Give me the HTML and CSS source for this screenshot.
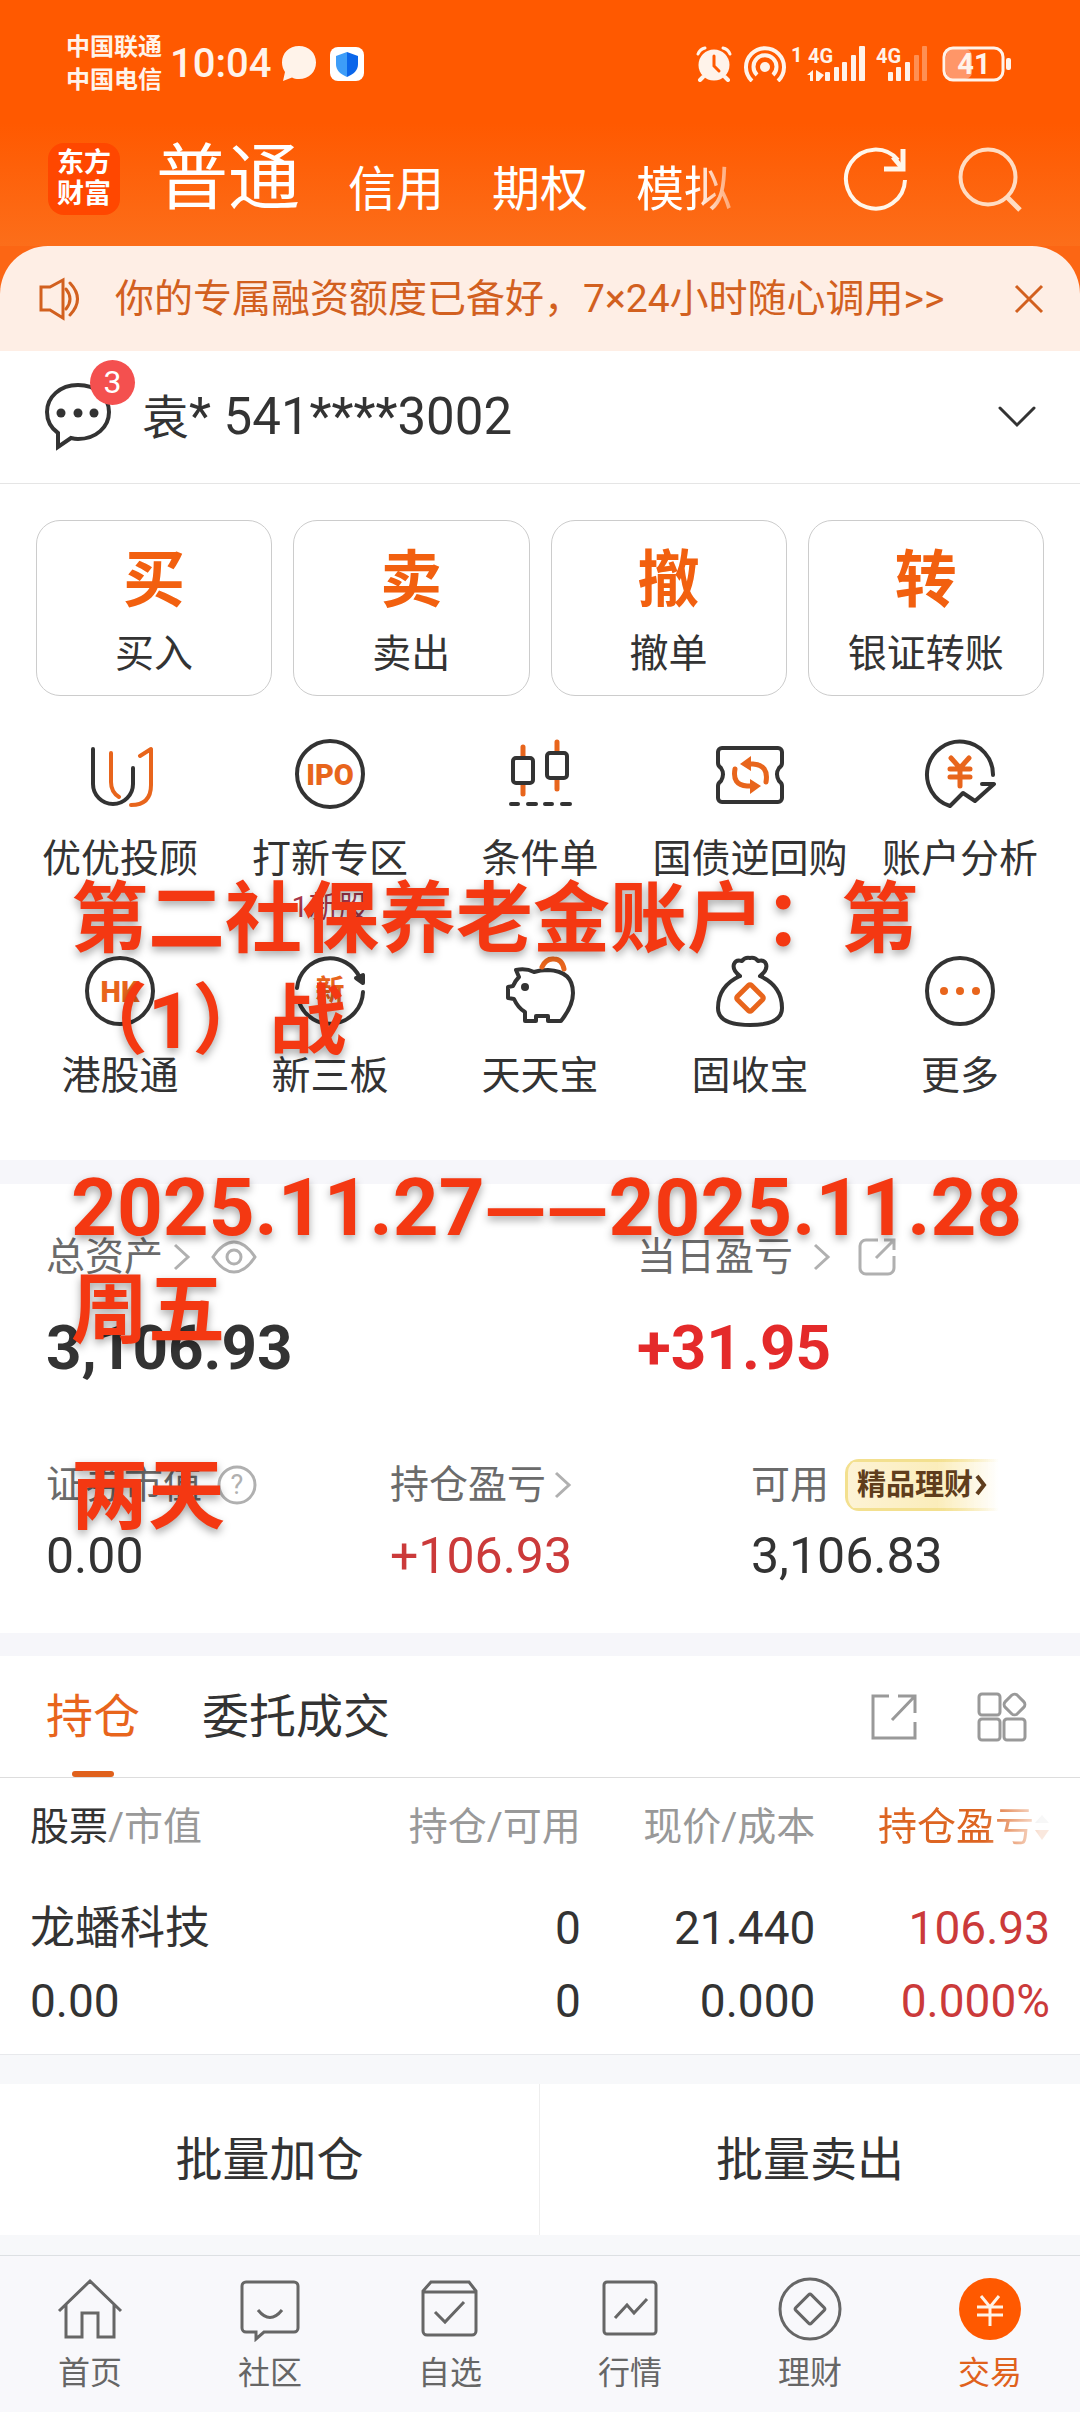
FILE: index.html
```html
<!DOCTYPE html>
<html lang="zh-CN">
<head>
<meta charset="utf-8">
<meta name="viewport" content="width=device-width, initial-scale=1">
<title>东方财富 交易</title>
<link rel="stylesheet" href="styles.css">
</head>
<body>
<div class="screen">
  <header class="top">
    <div class="status">
      <div class="carriers"><span>中国联通</span><span>中国电信</span></div>
      <span class="clock">10:04</span>
      <svg class="status-chat" width="36" height="36" viewBox="0 0 36 36"><path d="M18 0C28 0 35 7 35 16.500S28 33 18 33c-3 0-5-.5-7-1.500L2 35l2-9C2 23 1 20 1 16.500 1 7 8 0 18 0z" fill="#fff3ea"/></svg>
      <svg width="36" height="36" viewBox="0 0 36 36"><rect x="1" y="1" width="34" height="34" rx="8" fill="#fff"/><path d="M18 6l11 4v8c0 6-4 10-11 13z" fill="#0a66ea"/><path d="M18 6L7 10v8c0 6 4 10 11 13z" fill="#3d9df8"/></svg>
      <div class="status-right">
        <svg width="36" height="36" viewBox="0 0 36 36" fill="none" stroke="#fff3ea" stroke-linecap="round"><circle cx="18" cy="19" r="15.500" fill="#fff3ea" stroke="none"/><path d="M2 8q2-5 7-6M34 8q-2-5-7-6" stroke-width="3"/><path d="M7 31l-3 3M29 31l3 3" stroke-width="4"/><path d="M18 10v10l5 5" stroke="#ff5900" stroke-width="3"/></svg>
        <svg width="42" height="36" viewBox="0 0 42 36" fill="none" stroke="#fff3ea" stroke-width="4"><path d="M8 35a19 19 0 1 1 26 0M13 29a11.500 11.500 0 1 1 16 0"/><circle cx="21" cy="21" r="5" fill="#fff3ea" stroke="none"/></svg>
        <svg class="signals" width="140" height="44" viewBox="0 -4 140 44" fill="#fff3ea"><g font-family="Roboto, sans-serif" font-weight="700" font-size="20"><text x="1" y="16">1</text><text x="18" y="17">4G</text><text x="86" y="17">4G</text></g><path d="M17 29l6-5v11h-3v-6zM26 24l8 5-5 6h-3z"/><rect x="35" y="26" width="5" height="9" rx="1"/><rect x="44" y="21" width="5" height="14" rx="1"/><rect x="52" y="16" width="5" height="19" rx="1"/><rect x="61" y="9" width="5" height="26" rx="1"/><rect x="69" y="0" width="6" height="35" rx="1"/><rect x="98" y="26" width="5" height="9" rx="1"/><rect x="106" y="21" width="5" height="14" rx="1"/><rect x="115" y="16" width="5" height="19" rx="1"/><g opacity=".35"><rect x="124" y="9" width="5" height="26" rx="1"/><rect x="132" y="0" width="5" height="35" rx="1"/></g></svg>
        <svg class="battery" width="70" height="36" viewBox="0 0 70 36"><rect x="4" y="3" width="26" height="30" rx="7" fill="#ff9668"/><rect x="2" y="2" width="59" height="32" rx="9" fill="none" stroke="#fff3ea" stroke-width="3"/><rect x="64" y="12" width="5" height="12" rx="2" fill="#fff3ea"/><text x="32" y="28" text-anchor="middle" font-family="Roboto, sans-serif" font-weight="700" font-size="29" fill="#fff3ea">41</text></svg>
      </div>
    </div>
    <nav class="modes">
      <a class="logo" href="#"><span>东方</span><span>财富</span></a>
      <div class="mode-list">
        <a class="mode mode-on" href="#">普通</a>
        <a class="mode" href="#">信用</a>
        <a class="mode" href="#">期权</a>
        <a class="mode mode-fade" href="#">模拟</a>
      </div>
      <button class="icon-btn" aria-label="刷新"><svg width="66" height="66" viewBox="0 0 66 66" fill="none" stroke="#fff6ea" stroke-width="4"><path d="M62 34A29.500 29.500 0 1 1 55 14"/><path d="M60 3v20H41" stroke-width="5"/><path d="M50 11l10 12" stroke-width="5"/></svg></button>
      <button class="icon-btn" aria-label="搜索"><svg width="66" height="66" viewBox="0 0 66 66" fill="none" stroke="#ffdcc2" stroke-width="4"><circle cx="31" cy="31" r="27.500"/><path d="M50 51l13 13" stroke-width="5"/></svg></button>
    </nav>
  </header>

  <div class="notice-wrap">
    <div class="notice">
      <svg width="42" height="44" viewBox="0 0 42 44" fill="none" stroke="#d2601f" stroke-width="3"><path d="M2 10h9L24 3v38l-13-8H2z"/><path d="M27 12q8 10 0 20M31 6q15 16 0 32" stroke-linecap="round"/></svg>
      <a class="notice-text" href="#">你的专属融资额度已备好，7×24小时随心调用&gt;&gt;</a>
      <button class="icon-btn" aria-label="关闭"><svg width="30" height="30" viewBox="0 0 30 30" fill="none" stroke="#d2601f" stroke-width="3"><path d="M2 2l26 26M28 2L2 28"/></svg></button>
    </div>
  </div>

  <div class="account">
    <button class="icon-btn messages" aria-label="消息"><svg width="68" height="70" viewBox="0 0 68 70" fill="none" stroke="#333" stroke-width="4"><path d="M34 3c18 0 31 12 31 27S52 57 34 57c-3 0-5-.5-7-1L14 65V51C7 46 3 39 3 30 3 15 16 3 34 3z"/><g fill="#333" stroke="none"><circle cx="17" cy="31" r="4.500"/><circle cx="34" cy="31" r="4.500"/><circle cx="50" cy="31" r="4.500"/></g></svg><span class="badge">3</span></button>
    <span class="account-id"><span class="account-name">袁</span>* 541****3002</span>
    <button class="icon-btn" aria-label="切换账户"><svg width="38" height="24" viewBox="0 0 38 24" fill="none" stroke="#333" stroke-width="3" stroke-linecap="round"><path d="M2 3l17 17L36 3"/></svg></button>
  </div>

  <section class="quick">
    <button class="quick-btn"><span class="quick-glyph">买</span><span>买入</span></button>
    <button class="quick-btn"><span class="quick-glyph">卖</span><span>卖出</span></button>
    <button class="quick-btn"><span class="quick-glyph">撤</span><span>撤单</span></button>
    <button class="quick-btn"><span class="quick-glyph">转</span><span>银证转账</span></button>
  </section>

  <section class="services">
    <a class="service" href="#"><svg class="ico" viewBox="0 0 72 72"><path d="M9 11v35a20 20 0 0 0 40 0V30"/><path class="o" d="M27 15v29q0 10 8 15M56 18l11-7v36q0 20-20 20"/></svg><span>优优投顾</span></a>
    <a class="service" href="#"><svg class="ico" viewBox="0 0 72 72"><circle cx="36" cy="36" r="33"/><text class="heavy" x="36" y="47" text-anchor="middle">IPO</text></svg><span>打新专区</span><small>1新股</small></a>
    <a class="service" href="#"><svg class="ico" viewBox="0 0 72 72"><path class="o w" d="M19 9v10M19 46v10M53 4v10M53 41v10"/><rect x="9" y="20" width="20" height="25" rx="3"/><rect x="43" y="15" width="20" height="25" rx="3"/><path d="M7 66h7M24 66h8M41 66h7M58 66h8"/></svg><span>条件单</span></a>
    <a class="service" href="#"><svg class="ico" viewBox="0 0 72 72"><path d="M8 10h56a4 4 0 0 1 4 4v11q0 3-3 5-4 6 0 13 3 2 3 5v12a4 4 0 0 1-4 4H8a4 4 0 0 1-4-4V48q0-3 3-5 4-7 0-13-3-2-3-5V14a4 4 0 0 1 4-4z"/><path class="o w" d="M21 31q-3 16 12 17h4M52 44q3-17-13-18h-4"/><path class="of" d="M26 26l11-8v15zM47 48l-11-7v15z"/></svg><span>国债逆回购</span></a>
    <a class="service" href="#"><svg class="ico" viewBox="0 0 72 72"><path d="M69 37A33 33 0 1 0 26 68L39 55l12 8 19-17H58"/><path class="o w" d="M27 20l9 10 9-10M36 30v18M26 31h20M26 39h20"/></svg><span>账户分析</span></a>
    <a class="service" href="#"><svg class="ico" viewBox="0 0 72 72"><circle cx="36" cy="36" r="33"/><text class="heavy" x="36" y="47" text-anchor="middle">HK</text></svg><span>港股通</span></a>
    <a class="service" href="#"><svg class="ico" viewBox="0 0 72 72"><path d="M3 33A33 33 0 0 1 66 23M69 37A33 33 0 0 1 5 47"/><path d="M62 23l7-3v8z" fill="#333"/><text x="36" y="46" text-anchor="middle">新</text></svg><span>新三板</span></a>
    <a class="service" href="#"><svg class="ico" viewBox="0 0 72 72"><path d="M30 17q-8-4-18-2l3 7q-4 4-6 9l-5 1v11l6 1q4 9 11 13v9h11v-5h12v5h13q12-15 12-28 0-22-25-23-8 0-14 2z"/><path class="o w" d="M38 12q4-9 12-8 8 0 10 10"/><circle cx="21" cy="32" r="4" fill="#333" stroke="none"/></svg><span>天天宝</span></a>
    <a class="service" href="#"><svg class="ico" viewBox="0 0 72 72"><path d="M26 21q-8-6-6-12 2-5 8-3 3-4 8-3 5-1 8 3 6-2 8 3 2 6-6 12 22 10 22 32Q68 70 36 70T4 53Q4 31 26 21M26 21l-2-1M46 21l2-1"/><rect class="o w" x="26" y="33" width="20" height="20" rx="2" transform="rotate(45 36 43)"/></svg><span>固收宝</span></a>
    <a class="service" href="#"><svg class="ico" viewBox="0 0 72 72"><circle cx="36" cy="36" r="33"/><g class="of"><circle cx="20" cy="36" r="4"/><circle cx="36" cy="36" r="4"/><circle cx="52" cy="36" r="4"/></g></svg><span>更多</span></a>
  </section>

  <section class="assets">
    <div class="assets-main">
      <div>
        <div class="label">总资产<svg class="chev" viewBox="0 0 18 28"><path d="M2 2l13 12L2 26"/></svg><svg class="eye" viewBox="0 0 46 34"><path d="M2 17Q12 2 23 2t21 15Q34 32 23 32T2 17z"/><circle cx="23" cy="17" r="7"/></svg></div>
        <div class="total">3,106.93</div>
      </div>
      <div>
        <div class="label label-wide">当日盈亏<svg class="chev" viewBox="0 0 18 28"><path d="M2 2l13 12L2 26"/></svg><svg class="share" viewBox="0 0 40 40"><path d="M21 3H9a6 6 0 0 0-6 6v22a6 6 0 0 0 6 6h22a6 6 0 0 0 6-6V19M27 3h10v10M37 3L19 21"/></svg></div>
        <div class="total up">+31.95</div>
      </div>
    </div>
    <div class="assets-sub">
      <div>
        <div class="label label-tight">证券市值<svg class="help" viewBox="0 0 42 42"><circle cx="21" cy="21" r="18"/><text x="21" y="30" text-anchor="middle">?</text></svg></div>
        <div class="amount">0.00</div>
      </div>
      <div>
        <div class="label label-tight">持仓盈亏<svg class="chev" viewBox="0 0 18 28"><path d="M2 2l13 12L2 26"/></svg></div>
        <div class="amount up">+106.93</div>
      </div>
      <div>
        <div class="label">可用<a class="promo" href="#">精品理财<svg width="12" height="24" viewBox="0 0 12 24" fill="none" stroke="#5f3d1c" stroke-width="4"><path d="M2 3l7 9-7 9"/></svg></a></div>
        <div class="amount">3,106.83</div>
      </div>
    </div>
  </section>

  <section class="holdings">
    <div class="tabs">
      <button class="tab tab-on">持仓</button>
      <button class="tab">委托成交</button>
      <button class="icon-btn tabs-share" aria-label="分享"><svg width="50" height="50" viewBox="0 0 50 50" fill="none" stroke="#999" stroke-width="3"><path d="M20 4H4v42h42V30M29 4h17v17M46 4L23 28"/></svg></button>
      <button class="icon-btn" aria-label="布局"><svg width="52" height="52" viewBox="0 0 52 52" fill="none" stroke="#999" stroke-width="3"><rect x="3" y="3" width="21" height="21" rx="3"/><rect x="3" y="28" width="21" height="21" rx="3"/><rect x="28" y="28" width="21" height="21" rx="3"/><rect x="30" y="5" width="17" height="17" rx="4" transform="rotate(45 38.500 13.500)"/></svg></button>
    </div>
    <table class="positions">
      <thead>
        <tr><th scope="col"><b>股票</b>/市值</th><th scope="col">持仓/可用</th><th scope="col">现价/成本</th><th scope="col"><span class="sorted">持仓盈亏<svg width="16" height="30" viewBox="0 0 16 30"><path d="M1 11l7-8 7 8z" fill="#c9c9c9"/><path d="M1 18h14l-7 10z" fill="#dd6522"/></svg></span></th></tr>
      </thead>
      <tbody>
        <tr><td><span class="stock">龙蟠科技</span><br>0.00</td><td>0<br>0</td><td>21.440<br>0.000</td><td class="gain">106.93<br>0.000%</td></tr>
      </tbody>
    </table>
  </section>

  <div class="batch">
    <button class="batch-btn">批量加仓</button>
    <button class="batch-btn">批量卖出</button>
  </div>

  <nav class="bottom">
    <a class="nav" href="#"><svg viewBox="0 0 66 66"><path d="M2 35L33 5l31 30M9 29v32h16V37h16v24h16V29"/></svg><span>首页</span></a>
    <a class="nav" href="#"><svg viewBox="0 0 66 66"><path d="M9 6h48a4 4 0 0 1 4 4v42a4 4 0 0 1-4 4H27l-8 7v-7H9a4 4 0 0 1-4-4V10a4 4 0 0 1 4-4zM21 34q12 15 24 0"/></svg><span>社区</span></a>
    <a class="nav" href="#"><svg viewBox="0 0 66 66"><path d="M14 6h38l7 9v40a4 4 0 0 1-4 4H10a4 4 0 0 1-4-4V15zM6 16h53M18 36l10 10 19-20"/></svg><span>自选</span></a>
    <a class="nav" href="#"><svg viewBox="0 0 66 66"><rect x="7" y="6" width="52" height="52" rx="3"/><path d="M18 42l12-13 7 8 13-14"/></svg><span>行情</span></a>
    <a class="nav" href="#"><svg viewBox="0 0 66 66"><circle cx="33" cy="33" r="30"/><rect x="22" y="22" width="22" height="22" rx="2" transform="rotate(45 33 33)"/></svg><span>理财</span></a>
    <a class="nav nav-on" href="#"><svg viewBox="0 0 66 66"><circle cx="33" cy="33" r="31" fill="#ff5900" stroke="none"/><path stroke="#fff3e6" d="M24 20l9 11 9-11M33 31v19M20 31h26M20 39h26"/></svg><span>交易</span></a>
  </nav>

  <div class="caption">
    <p>第二社保养老金账户：第<br>（1）战</p>
    <p><span class="dates">2025.11.27<span class="dash">——</span>2025.11.28</span><br>周五</p>
    <p>两天</p>
  </div>
</div>
</body>
</html>
```

FILE: styles.css
```css
* { box-sizing: border-box; }

body {
  margin: 0;
  background: #fff;
  color: #333;
  font-family: Roboto, "Noto Sans CJK SC", sans-serif;
  font-size: 39px;
  line-height: 50px;
}

a { color: inherit; text-decoration: none; }

button {
  margin: 0;
  padding: 0;
  border: 0;
  background: none;
  color: inherit;
  font: inherit;
}

svg { display: block; flex: none; }

.icon-btn { display: flex; }

.screen {
  position: relative;
  display: flex;
  flex-direction: column;
  min-height: 100vh;
  overflow: hidden;
}

/* Header */
.top {
  background: linear-gradient(#ff5900 0, #ff5900 50%, #fc6e1a 100%);
  color: #fff;
}

.status {
  display: flex;
  align-items: center;
  padding: 31px 66px 0;
  color: #fff3ea;
}

.carriers {
  display: flex;
  flex-direction: column;
  font-size: 24px;
  font-weight: 700;
  line-height: 33px;
}

.clock {
  margin-left: 8px;
  font-size: 40px;
  font-weight: 500;
}

.status-chat { margin: 0 12px 0 10px; }

.status-right {
  display: flex;
  align-items: center;
  gap: 12px;
  margin-left: auto;
  margin-right: 8px;
}

.signals { margin-left: -8px; }
.battery { margin-right: -6px; }

.modes {
  display: flex;
  align-items: center;
  gap: 48px;
  padding: 32px 57px 17px 48px;
}

.logo {
  display: flex;
  flex-direction: column;
  align-items: center;
  justify-content: center;
  width: 72px;
  height: 72px;
  margin-right: -12px;
  border-radius: 16px;
  background: #ff4700;
  font-size: 27px;
  font-weight: 700;
  line-height: 31px;
}

.mode-list {
  display: flex;
  flex: 1;
  align-items: flex-end;
  gap: 48px;
}

.mode { font-size: 48px; line-height: 78px; }
.mode-on { font-size: 72px; line-height: 100px; }

.mode-fade {
  -webkit-mask-image: linear-gradient(90deg, #000 60%, rgba(0, 0, 0, .4) 100%);
  mask-image: linear-gradient(90deg, #000 60%, rgba(0, 0, 0, .4) 100%);
}

/* Notice */
.notice-wrap { background: #fc6614; }

.notice {
  display: flex;
  align-items: center;
  padding: 28px 36px 27px 39px;
  border-radius: 48px 48px 0 0;
  background: #feeee5;
  color: #d2601f;
}

.notice-text { flex: 1; margin-left: 34px; }

/* Account */
.account {
  display: flex;
  align-items: center;
  padding: 31px 44px;
  border-bottom: 1px solid #e5e5e5;
}

.messages { position: relative; }

.badge {
  position: absolute;
  top: -22px;
  left: 46px;
  width: 45px;
  height: 45px;
  border-radius: 50%;
  background: #f4504f;
  color: #fff;
  font-size: 32px;
  line-height: 45px;
  text-align: center;
}

.account-id { flex: 1; margin-left: 30px; font-size: 51px; }
.account-name { font-size: 47px; }

/* Quick actions */
.quick {
  display: grid;
  grid-template-columns: repeat(4, 1fr);
  gap: 21px;
  padding: 36px 36px 0;
}

.quick-btn {
  display: flex;
  flex-direction: column;
  align-items: center;
  gap: 10px;
  padding: 22px 0 16px;
  border: 1px solid #ccc;
  border-radius: 24px;
}

.quick-glyph {
  color: #f2600f;
  font-size: 62px;
  font-weight: 700;
  line-height: 76px;
}

/* Services */
.services {
  display: grid;
  grid-template-columns: repeat(5, 1fr);
  row-gap: 31px;
  padding: 42px 15px 59px;
}

.service {
  display: flex;
  flex-direction: column;
  align-items: center;
  white-space: nowrap;
}

.service span { margin-top: 24px; }

.service small {
  margin-top: 6px;
  color: #a8384a;
  font-size: 30px;
  line-height: 34px;
}

.ico {
  width: 72px;
  height: 72px;
  fill: none;
  stroke: #333;
  stroke-width: 4;
  stroke-linecap: round;
  stroke-linejoin: round;
}

.ico .o { stroke: #e8651c; }
.ico .w { stroke-width: 5; }
.ico .of { fill: #e8651c; stroke: none; }

.ico text {
  fill: #e8651c;
  stroke: none;
  font-size: 29px;
  font-weight: 700;
}

.ico .heavy { font-weight: 900; }

/* Assets */
.assets {
  padding: 43px 48px 47px 46px;
  border-top: 24px solid #f6f6fa;
}

.assets-main { display: grid; grid-template-columns: 591fr 395fr; }

.assets-sub {
  display: grid;
  grid-template-columns: 344fr 361fr 281fr;
  margin-top: 71px;
}

.label {
  display: flex;
  align-items: center;
  gap: 16px;
  height: 60px;
  color: #6b6b6b;
  white-space: nowrap;
}

.label-wide { gap: 20px; }
.label-tight { gap: 8px; }

.chev, .eye, .share, .help { fill: none; stroke: #b0b0b0; stroke-width: 3; }
.chev { width: 18px; height: 28px; }
.eye { width: 46px; height: 34px; margin-left: 4px; }
.label:not(.label-tight):not(.label-wide) .chev { margin-left: -6px; }
.share { width: 40px; height: 40px; margin-left: 6px; }
.help { width: 42px; height: 42px; margin-left: 6px; }

.help text { fill: #b0b0b0; stroke: none; font-size: 27px; }

.total {
  margin-top: 25px;
  font-size: 62px;
  font-weight: 700;
  line-height: 72px;
}

.amount {
  margin-top: 11px;
  font-size: 50px;
  line-height: 60px;
}

.up { color: #cb3a3a; }
.total.up { color: #e42a2a; }

.promo {
  display: flex;
  align-items: center;
  gap: 2px;
  height: 52px;
  padding: 0 12px;
  border-radius: 14px 0 0 14px;
  background:
    linear-gradient(90deg, #f3e08f 60%, rgba(243, 224, 143, 0)) top / 100% 3px no-repeat,
    linear-gradient(90deg, #f3e08f 60%, rgba(243, 224, 143, 0)) bottom / 100% 3px no-repeat,
    linear-gradient(90deg, #fdf3d6, #fbedbb 60%, rgba(255, 255, 255, 0));
  box-shadow: inset 3px 0 #f3e08f;
  color: #5f3d1c;
  font-size: 29px;
  font-weight: 700;
}

/* Holdings */
.holdings { border-top: 23px solid #f6f6fa; }

.tabs {
  display: flex;
  align-items: center;
  padding: 0 52px 0 46px;
  border-bottom: 1px solid #ddd;
}

.tab {
  position: relative;
  margin-right: 62px;
  font-size: 47px;
  line-height: 121px;
}

.tab-on { color: #e8651c; }

.tab-on::after {
  content: "";
  position: absolute;
  bottom: 0;
  left: calc(50% - 21px);
  width: 42px;
  height: 6px;
  border-radius: 3px;
  background: #e0611c;
}

.tabs-share { margin: 0 57px 0 auto; }

.positions {
  width: calc(100% - 60px);
  margin: 0 30px;
  border-collapse: collapse;
  table-layout: fixed;
  text-align: right;
}

.positions th {
  width: 23%;
  height: 98px;
  padding: 0;
  color: #999;
  font-weight: 400;
  white-space: nowrap;
}

.positions th:first-child { width: 31%; }
.positions th:first-child, .positions td:first-child { text-align: left; }
.positions b { color: #333; font-weight: 400; }

.sorted {
  display: flex;
  align-items: center;
  justify-content: flex-end;
  color: #dd6522;
  -webkit-mask-image: linear-gradient(90deg, #000 72%, rgba(0, 0, 0, .15) 96%);
  mask-image: linear-gradient(90deg, #000 72%, rgba(0, 0, 0, .15) 96%);
}

.positions td {
  padding: 16px 0;
  font-size: 46px;
  line-height: 73px;
}

.stock { font-size: 45px; line-height: 1; }
.positions .gain { color: #cb3a3a; }

/* Batch buttons */
.batch {
  display: grid;
  grid-template-columns: 1fr 1fr;
  padding: 29px 0 20px;
  border-top: 1px solid #e8e9ec;
  background: #f7f8fa;
}

.batch-btn {
  background: #fff;
  font-size: 47px;
  line-height: 151px;
}

.batch-btn:first-child { border-right: 1px solid #eee; }

/* Bottom navigation */
.bottom {
  display: grid;
  grid-template-columns: repeat(6, 1fr);
  margin-top: auto;
  padding: 20px 0 19px;
  border-top: 1px solid #dde0e3;
  background: #f8f8fb;
  color: #666;
  font-size: 32px;
  line-height: 40px;
}

.nav {
  display: flex;
  flex-direction: column;
  align-items: center;
  gap: 11px;
}

.nav svg {
  width: 66px;
  height: 66px;
  fill: none;
  stroke: #666;
  stroke-width: 3;
}

.nav-on { color: #e0611c; }

/* Caption laid over the page */
.caption {
  position: absolute;
  top: 869px;
  left: 71px;
  color: #f43812;
  font-size: 77px;
  font-weight: 700;
  line-height: 102px;
  text-shadow: 0 4px 8px rgba(0, 0, 0, .35);
  white-space: nowrap;
  pointer-events: none;
}

.caption p { margin: 0 0 84px; }
.dates { font-size: 80px; }

.dash {
  font-family: "DejaVu Sans", sans-serif;
  font-size: 62px;
  line-height: 1;
  vertical-align: 6px;
}
```
